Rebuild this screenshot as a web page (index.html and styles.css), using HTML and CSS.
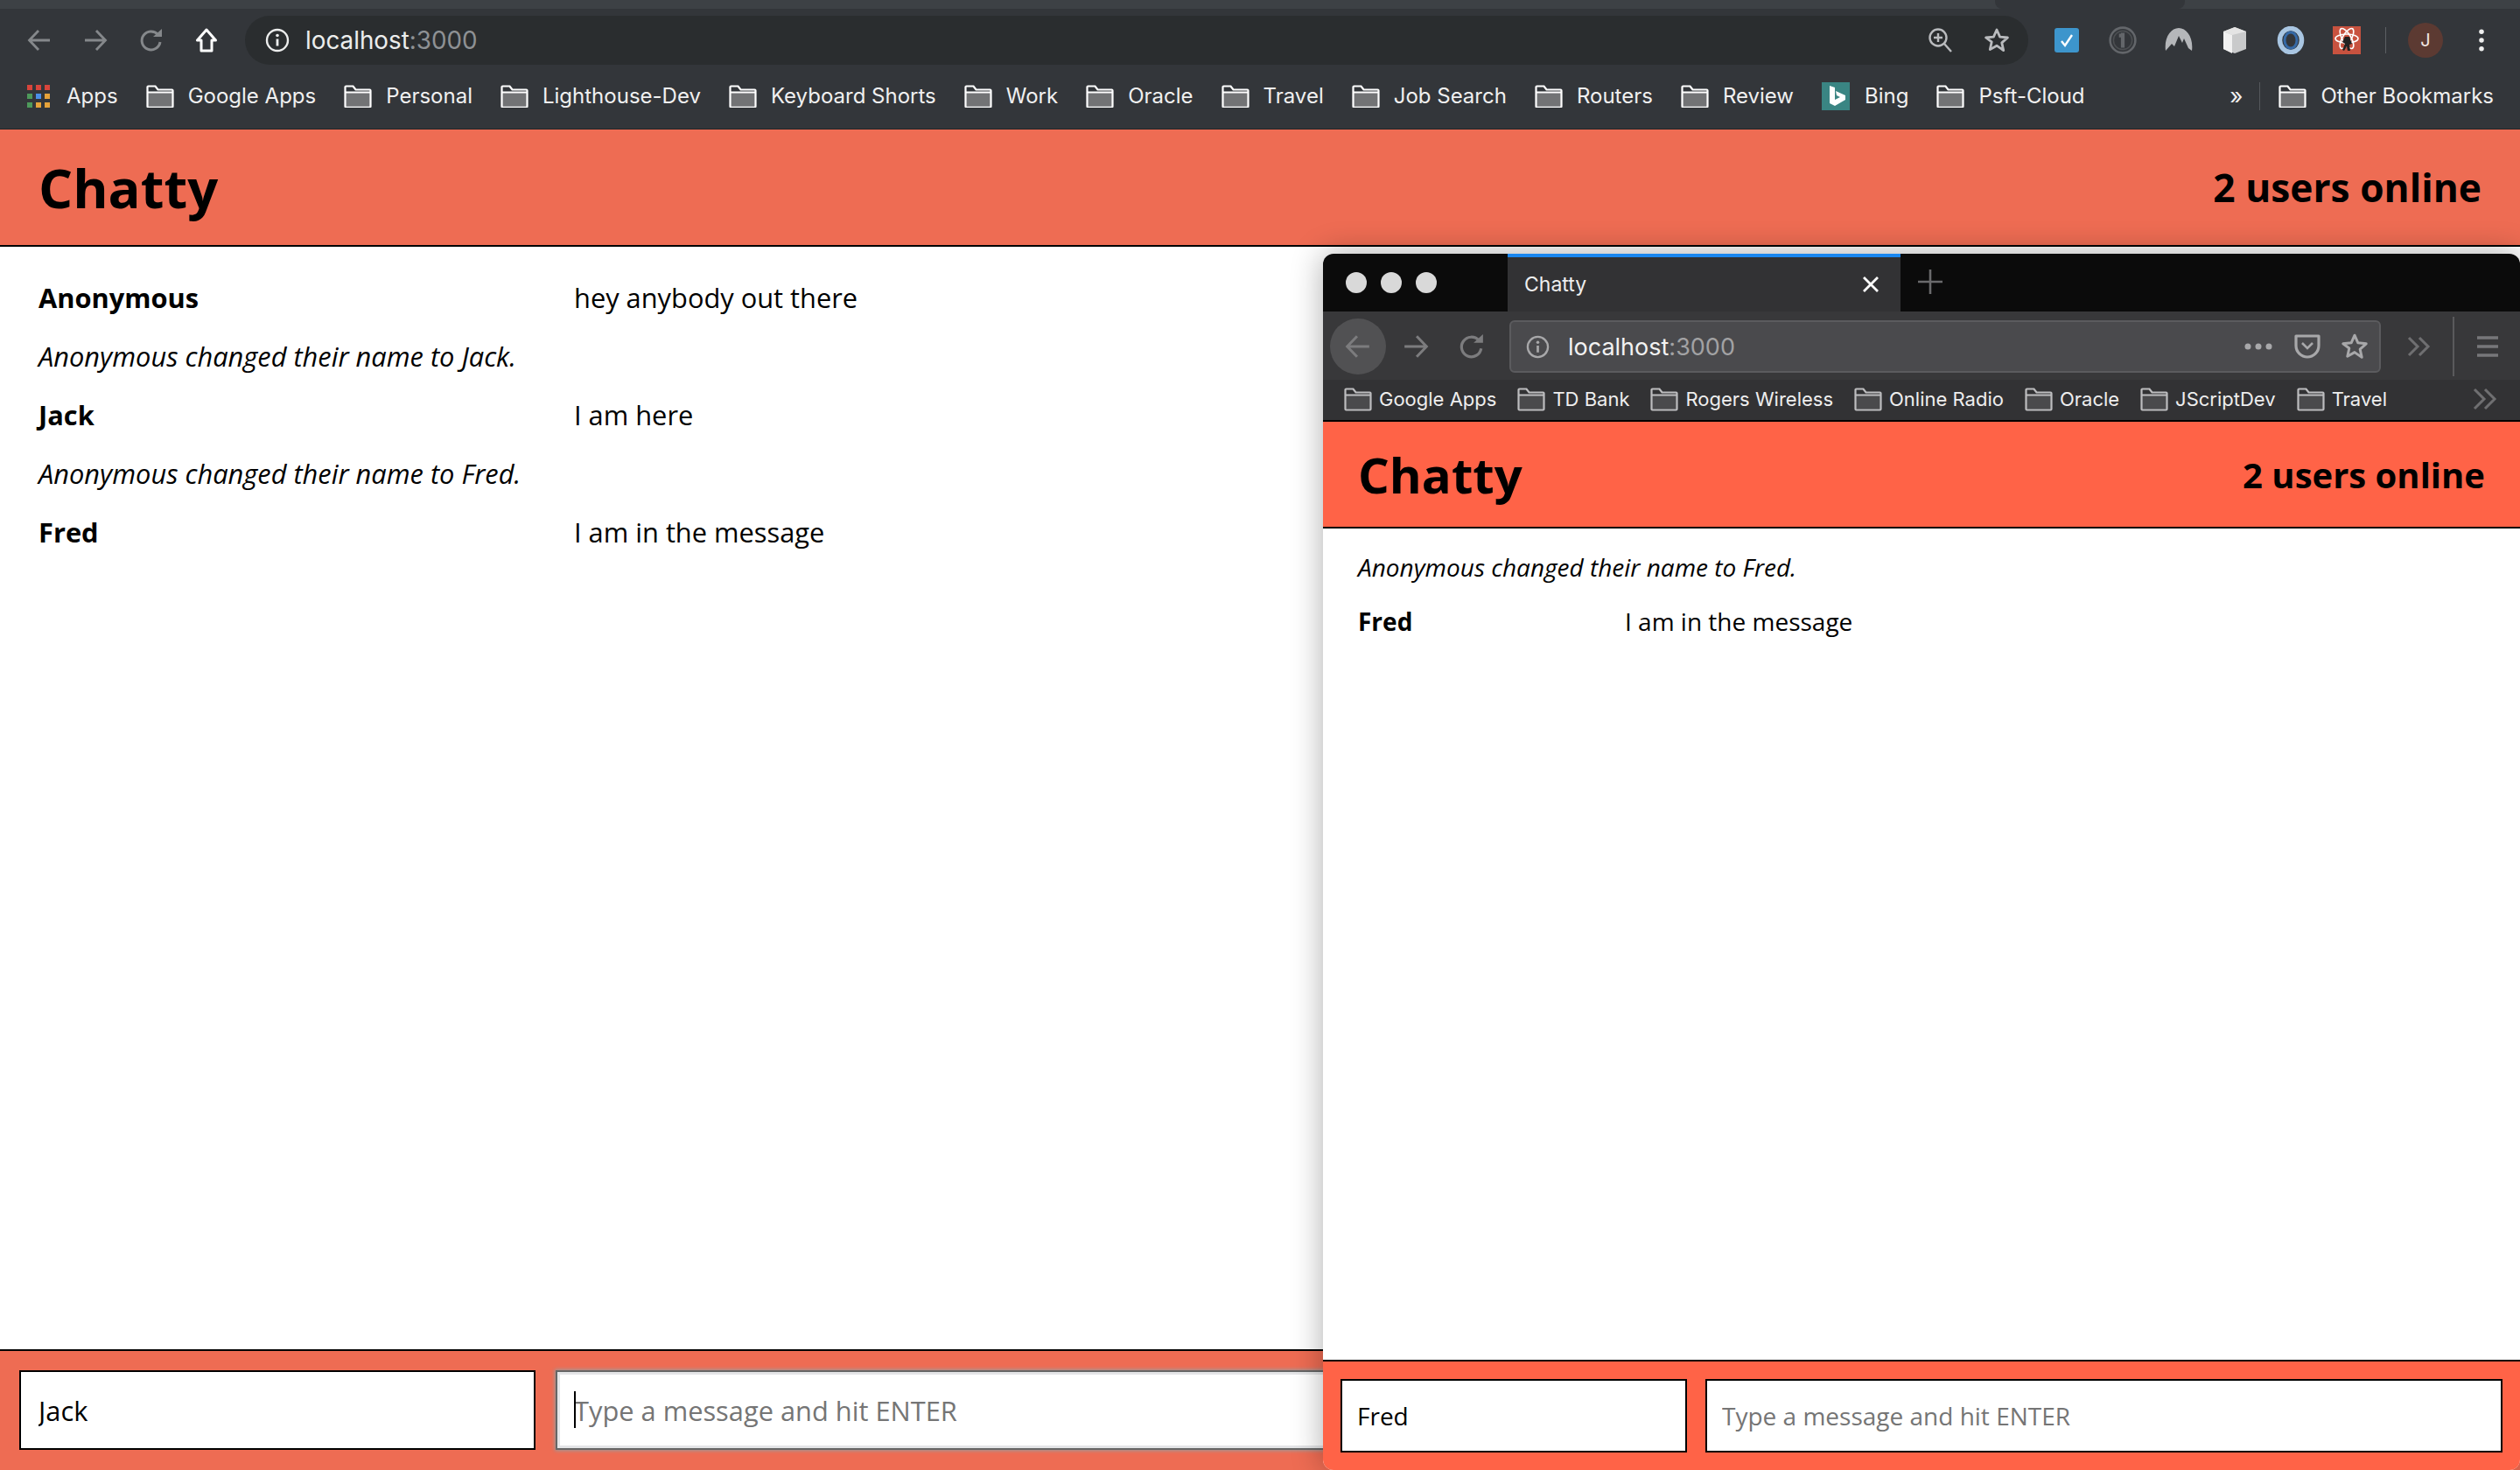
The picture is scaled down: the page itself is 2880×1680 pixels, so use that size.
FILE: index.html
```html
<!DOCTYPE html>
<html lang="en">
<head>
    <meta charset="UTF-8">
    <meta name="viewport" content="width=device-width, initial-scale=1.0">
    <title>Chatty</title>
    <link rel="stylesheet" href="styles.css">
</head>
<body>
    <!-- Shared icons -->
    <svg class="defs" width="0" height="0">
        <symbol id="folder" viewBox="0 0 32 26">
            <path d="M2 9h28v15H2z" fill="var(--folder-fill)"/>
            <path d="M1.500 24.500V2.500a1 1 0 0 1 1-1h8l3 4h16a1 1 0 0 1 1 1v18a1 1 0 0 1-1 1h-27a1 1 0 0 1-1-1zM1.500 8.500h29" fill="none" stroke="currentColor" stroke-width="2.200"/>
        </symbol>
        <symbol id="back" viewBox="0 0 28 28">
            <path d="M26 14H3M13 3 2.500 14 13 25" fill="none" stroke="currentColor" stroke-width="2.800"/>
        </symbol>
        <symbol id="forward" viewBox="0 0 28 28">
            <path d="M2 14h23M15 3l10.500 11L15 25" fill="none" stroke="currentColor" stroke-width="2.800"/>
        </symbol>
        <symbol id="reload" viewBox="0 0 28 28">
            <path d="M21.500 7.500A10.500 10.500 0 1 0 24 16" fill="none" stroke="currentColor" stroke-width="3"/>
            <path d="M16 10h10V1z" fill="currentColor"/>
        </symbol>
        <symbol id="info" viewBox="0 0 28 28">
            <circle cx="14" cy="14" r="12" fill="none" stroke="currentColor" stroke-width="2.400"/>
            <path d="M14 12.500v8" stroke="currentColor" stroke-width="2.800"/>
            <circle cx="14" cy="8.500" r="1.800" fill="currentColor"/>
        </symbol>
        <symbol id="star" viewBox="0 0 30 30">
            <path d="m15 3 3.600 8.100 8.800.9-6.600 5.900 1.900 8.700L15 21.200l-7.700 4.400 1.900-8.700L2.600 12l8.800-.9z" fill="none" stroke="currentColor" stroke-width="2.800" stroke-linejoin="round"/>
        </symbol>
    </svg>

    <!-- Chrome window -->
    <div class="window">
        <div class="tabstrip">
            <div class="tab-notch"></div>
        </div>
        <div class="toolbar">
            <svg class="nav-ico dim"><use href="#back"/></svg>
            <svg class="nav-ico dim"><use href="#forward"/></svg>
            <svg class="nav-ico dim"><use href="#reload"/></svg>
            <svg class="nav-ico home" viewBox="0 0 26 28"><path d="M13 2 2.500 14H7v12h12V14h4.500z" fill="none" stroke="#fff" stroke-width="3" stroke-linejoin="round"/></svg>
            <div class="omnibox">
                <svg class="omni-info"><use href="#info"/></svg>
                <span class="url">localhost<span class="url-port">:3000</span></span>
                <svg class="omni-zoom" viewBox="0 0 28 30">
                    <circle cx="12" cy="12" r="9.500" fill="none" stroke="#b9bbbe" stroke-width="2.400"/>
                    <path d="M12 7v10M7 12h10M19 19l8 9" stroke="#b9bbbe" stroke-width="2.400"/>
                </svg>
                <svg class="omni-star"><use href="#star"/></svg>
            </div>
            <div class="extensions">
                <svg class="ext" viewBox="-2 -2 32 32"><rect width="28" height="28" rx="3" fill="#3d95cc"/><path d="m8 15 4 5 8-12" fill="none" stroke="#fff" stroke-width="2.400"/></svg>
                <svg class="ext" viewBox="0 0 30 30"><circle cx="15" cy="15" r="13.500" fill="none" stroke="#63666a" stroke-width="2.400"/><circle cx="15" cy="15" r="10" fill="none" stroke="#4c4f52" stroke-width="1.500"/><path d="M13 7h4v16h-4zM11 8h4v4h-4z" fill="#63666a"/></svg>
                <svg class="ext" viewBox="0 0 32 30"><path d="M1 27C-1 12 7 1 16 1s17 11 15 26l-4-3-5-11-2 5-4-8-5 12-3-3z" fill="#b5b7ba"/></svg>
                <svg class="ext" viewBox="0 0 32 32"><path d="m16 1 13 5v20l-13 5-13-5V6z" fill="#c9cacb"/><path d="M3 6l10 4v21l-10-5z" fill="#f1f1f1"/><path d="m16 1 13 5-16 4L3 6z" fill="#e4e4e4"/></svg>
                <svg class="ext" viewBox="0 0 32 32"><ellipse cx="16" cy="16" rx="12.500" ry="13.500" fill="none" stroke="#a9c6e2" stroke-width="5.500"/><ellipse cx="16" cy="16" rx="7" ry="9" fill="none" stroke="#3569a6" stroke-width="3"/></svg>
                <svg class="ext" viewBox="0 0 32 32"><rect width="32" height="32" fill="#c8523f"/><g fill="none" stroke="#fff" stroke-width="1.600"><ellipse cx="16" cy="14" rx="13" ry="5"/><ellipse cx="16" cy="14" rx="13" ry="5" transform="rotate(60 16 14)"/><ellipse cx="16" cy="14" rx="13" ry="5" transform="rotate(120 16 14)"/></g><path d="M14 12h5l3 8-3 1 1 7h-3l-1-5-3 5-2-1 3-7-3-2z" fill="#222"/></svg>
            </div>
            <div class="toolbar-sep"></div>
            <div class="avatar">J</div>
            <svg class="kebab" viewBox="0 0 8 32"><circle cx="4" cy="4" r="3.400" fill="#eee"/><circle cx="4" cy="16" r="3.400" fill="#eee"/><circle cx="4" cy="28" r="3.400" fill="#eee"/></svg>
        </div>
        <div class="bookmarks">
            <div class="bm">
                <svg class="apps" viewBox="0 0 26 26">
                    <path d="M0 0h6v6H0z" fill="#d8453b"/><path d="M10 0h6v6h-6z" fill="#d8453b"/><path d="M20 0h6v6h-6z" fill="#d8453b"/>
                    <path d="M0 10h6v6H0z" fill="#4e9a5b"/><path d="M10 10h6v6h-6z" fill="#4a8fe8"/><path d="M20 10h6v6h-6z" fill="#e6a33a"/>
                    <path d="M0 20h6v6H0z" fill="#4e9a5b"/><path d="M10 20h6v6h-6z" fill="#e6a33a"/><path d="M20 20h6v6h-6z" fill="#e6a33a"/>
                </svg>
                Apps
            </div>
            <div class="bm"><svg class="folder"><use href="#folder"/></svg>Google Apps</div>
            <div class="bm"><svg class="folder"><use href="#folder"/></svg>Personal</div>
            <div class="bm"><svg class="folder"><use href="#folder"/></svg>Lighthouse-Dev</div>
            <div class="bm"><svg class="folder"><use href="#folder"/></svg>Keyboard Shorts</div>
            <div class="bm"><svg class="folder"><use href="#folder"/></svg>Work</div>
            <div class="bm"><svg class="folder"><use href="#folder"/></svg>Oracle</div>
            <div class="bm"><svg class="folder"><use href="#folder"/></svg>Travel</div>
            <div class="bm"><svg class="folder"><use href="#folder"/></svg>Job Search</div>
            <div class="bm"><svg class="folder"><use href="#folder"/></svg>Routers</div>
            <div class="bm"><svg class="folder"><use href="#folder"/></svg>Review</div>
            <div class="bm">
                <svg class="bing" viewBox="0 0 32 32"><rect width="32" height="32" fill="#3a8583"/><path d="M9 4l6 2v14l6-3-4-2-1-5 11 5v5L15 27l-6-3z" fill="#fff"/></svg>
                Bing
            </div>
            <div class="bm"><svg class="folder"><use href="#folder"/></svg>Psft-Cloud</div>
            <div class="bm-more">»</div>
            <div class="bm-sep"></div>
            <div class="bm"><svg class="folder"><use href="#folder"/></svg>Other Bookmarks</div>
        </div>
        <main class="chatty">
            <nav class="navbar">
                <h1 class="brand">Chatty</h1>
                <span class="user-count">2 users online</span>
            </nav>
            <div class="messages">
                <div class="message"><span class="username">Anonymous</span><span class="content">hey anybody out there</span></div>
                <div class="notification">Anonymous changed their name to Jack.</div>
                <div class="message"><span class="username">Jack</span><span class="content">I am here</span></div>
                <div class="notification">Anonymous changed their name to Fred.</div>
                <div class="message"><span class="username">Fred</span><span class="content">I am in the message</span></div>
            </div>
            <footer class="chatbar">
                <input class="chatbar-name" value="Jack">
                <div class="focused-wrap">
                    <input class="chatbar-msg focused" placeholder="Type a message and hit ENTER">
                </div>
            </footer>
        </main>
    </div>

    <!-- Firefox window on top -->
    <div class="window ff">
        <div class="ff-tabstrip">
            <div class="lights"><i></i><i></i><i></i></div>
            <div class="ff-tab">
                <span>Chatty</span>
                <svg class="ff-close" viewBox="0 0 20 20"><path d="M2 2l16 16M18 2 2 18" stroke="#fff" stroke-width="2.800"/></svg>
            </div>
            <svg class="ff-plus" viewBox="0 0 28 28"><path d="M14 0v28M0 14h28" stroke="#6a6a6c" stroke-width="2.600"/></svg>
        </div>
        <div class="ff-toolbar">
            <div class="ff-backbtn"><svg class="ff-ico"><use href="#back"/></svg></div>
            <svg class="ff-ico ff-fwd"><use href="#forward"/></svg>
            <svg class="ff-ico ff-reload"><use href="#reload"/></svg>
            <div class="ff-urlbar">
                <svg class="ff-info"><use href="#info"/></svg>
                <span class="ff-url">localhost<span class="ff-port">:3000</span></span>
                <svg class="ff-dots" viewBox="0 0 32 8"><circle cx="4" cy="4" r="3.500" fill="#a8a8aa"/><circle cx="16" cy="4" r="3.500" fill="#a8a8aa"/><circle cx="28" cy="4" r="3.500" fill="#a8a8aa"/></svg>
                <svg class="ff-pocket" viewBox="0 0 30 28"><path d="M2 2h26v11a13 13 0 0 1-26 0z" fill="none" stroke="#a8a8aa" stroke-width="3.200" stroke-linejoin="round"/><path d="m9 10 6 6 6-6" fill="none" stroke="#a8a8aa" stroke-width="2.600"/></svg>
                <svg class="ff-star"><use href="#star"/></svg>
            </div>
            <svg class="ff-chevrons" viewBox="0 0 28 24"><path d="m2 2 10 10L2 22M14 2l10 10-10 10" fill="none" stroke="#6f6f71" stroke-width="3"/></svg>
            <div class="ff-sep"></div>
            <svg class="ff-menu" viewBox="0 0 24 24"><path d="M0 2h24M0 12h24M0 22h24" stroke="#77777a" stroke-width="3.400"/></svg>
        </div>
        <div class="ff-bookmarks">
            <div class="ff-bm"><svg class="ff-folder"><use href="#folder"/></svg>Google Apps</div>
            <div class="ff-bm"><svg class="ff-folder"><use href="#folder"/></svg>TD Bank</div>
            <div class="ff-bm"><svg class="ff-folder"><use href="#folder"/></svg>Rogers Wireless</div>
            <div class="ff-bm"><svg class="ff-folder"><use href="#folder"/></svg>Online Radio</div>
            <div class="ff-bm"><svg class="ff-folder"><use href="#folder"/></svg>Oracle</div>
            <div class="ff-bm"><svg class="ff-folder"><use href="#folder"/></svg>JScriptDev</div>
            <div class="ff-bm"><svg class="ff-folder"><use href="#folder"/></svg>Travel</div>
            <svg class="ff-bm-more" viewBox="0 0 28 26"><path d="m2 2 11 11L2 24M14 2l11 11-11 11" fill="none" stroke="#6f6f71" stroke-width="3"/></svg>
        </div>
        <main class="chatty small">
            <nav class="navbar">
                <h1 class="brand">Chatty</h1>
                <span class="user-count">2 users online</span>
            </nav>
            <div class="messages">
                <div class="notification">Anonymous changed their name to Fred.</div>
                <div class="message"><span class="username">Fred</span><span class="content">I am in the message</span></div>
            </div>
            <footer class="chatbar">
                <input class="chatbar-name" value="Fred">
                <input class="chatbar-msg" placeholder="Type a message and hit ENTER">
            </footer>
        </main>
    </div>
</body>
</html>
```

FILE: styles.css
```css
* {
    box-sizing: border-box;
}

html, body {
    height: 100%;
    margin: 0;
    overflow: hidden;
}

body {
    position: relative;
    font-family: "Open Sans", sans-serif;
    color: #000;
    background: #fff;
}

.defs {
    position: absolute;
}

.window {
    display: flex;
    flex-direction: column;
    height: 100%;
}

/* Chrome */
.tabstrip {
    flex: none;
    height: 10px;
    background: #3d4145;
    display: flex;
}

.tab-notch {
    width: 217px;
    height: 10px;
    margin-left: 2280px;
    background: #33363a;
    border-radius: 0 0 8px 8px;
}

.toolbar {
    flex: none;
    height: 74px;
    padding: 8px 0 10px 31px;
    background: #33363a;
    display: flex;
    align-items: center;
}

.nav-ico {
    width: 28px;
    height: 28px;
    margin-right: 36px;
    flex: none;
}

.dim {
    color: #85888b;
}

.home {
    width: 26px;
    margin-right: 31px;
}

.omnibox {
    flex: none;
    width: 2038px;
    height: 56px;
    background: #2a2d2f;
    border-radius: 28px;
    display: flex;
    align-items: center;
    padding-left: 23px;
}

.omni-info {
    width: 28px;
    height: 28px;
    color: #eceded;
    flex: none;
}

.url {
    margin-left: 18px;
    font-family: Inter, sans-serif;
    font-size: 27.8px;
    color: #eceded;
}

.url-port {
    color: #8e9194;
}

.omni-zoom {
    width: 28px;
    height: 30px;
    margin-left: auto;
}

.omni-star {
    width: 30px;
    height: 30px;
    margin-left: 36px;
    margin-right: 21px;
    color: #b9bbbe;
}

.extensions {
    display: flex;
    align-items: center;
    margin-left: 28px;
}

.ext {
    width: 32px;
    height: 32px;
    margin-right: 32px;
    flex: none;
}

.toolbar-sep {
    width: 1px;
    height: 30px;
    margin-left: -4px;
    background: #5c5f63;
}

.avatar {
    width: 40px;
    height: 40px;
    margin-left: 25px;
    border-radius: 50%;
    background: #5c3a32;
    color: #f2e6e2;
    font-family: Inter, sans-serif;
    font-size: 20px;
    display: flex;
    align-items: center;
    justify-content: center;
}

.kebab {
    width: 8px;
    height: 26px;
    margin-left: 40px;
}

.bookmarks {
    flex: none;
    height: 64px;
    padding: 0 30px 12px 31px;
    background: #33363a;
    border-bottom: 1px solid #232527;
    display: flex;
    align-items: center;
    gap: 32px;
    --folder-fill: #727375;
    color: #f0f0f0;
    font-family: Inter, sans-serif;
    font-size: 24px;
}

.bm {
    display: flex;
    align-items: center;
    white-space: nowrap;
}

.apps {
    width: 26px;
    height: 26px;
    margin-right: 19px;
}

.folder {
    width: 32px;
    height: 26px;
    margin-right: 16px;
    color: #fff;
}

.bing {
    width: 32px;
    height: 32px;
    margin-right: 17px;
}

.bm-more {
    margin-left: auto;
    font-size: 26px;
}

.bm-sep {
    width: 1px;
    height: 32px;
    margin-left: -13px;
    margin-right: -11px;
    background: #55585c;
}

/* The chat app */
.chatty {
    flex: 1;
    min-height: 0;
    display: flex;
    flex-direction: column;
    --app-bg: #ee6c53;
}

.navbar {
    flex: none;
    height: 134px;
    padding: 0 44px;
    background: var(--app-bg);
    border-bottom: 2px solid #000;
    display: flex;
    align-items: center;
    justify-content: space-between;
}

.brand {
    margin: 0;
    font-size: 61.5px;
    font-weight: 700;
}

.user-count {
    font-size: 44.3px;
    font-weight: 700;
}

.messages {
    flex: 1;
    padding: 24px 0 0 44px;
    font-size: 30.8px;
}

.message, .notification {
    height: 67px;
    display: flex;
    align-items: center;
}

.username {
    width: 612px;
    font-weight: 700;
}

.notification {
    font-style: italic;
}

.chatbar {
    flex: none;
    height: 138px;
    padding: 22px 22px 23px;
    background: var(--app-bg);
    border-top: 2px solid #000;
    display: flex;
    gap: 23px;
}

.chatbar input {
    font-family: "Open Sans", sans-serif;
    font-size: 30.8px;
    color: #000;
    background: #fff;
    border: 2px solid #000;
    padding: 0 20px;
    outline: none;
    border-radius: 0;
}

.chatbar input::placeholder {
    color: #757575;
}

.chatbar-name {
    flex: none;
    width: 590px;
}

.chatbar-msg {
    flex: 1;
    min-width: 0;
}

.focused-wrap {
    flex: 1;
    position: relative;
    display: flex;
}

.focused-wrap::after {
    content: "";
    position: absolute;
    left: 21px;
    top: 24px;
    width: 2px;
    height: 42px;
    background: #000;
}

.chatbar input.focused {
    padding-left: 19px;
    border: 2px solid #666;
    box-shadow: inset 0 0 0 3px #e4e5e7, 0 0 4px 1px #9a9a9a;
}

/* Firefox window, sits over the other one */
.ff {
    position: absolute;
    left: 1512px;
    top: 290px;
    right: 0;
    bottom: 0;
    height: auto;
    border-radius: 12px;
    overflow: hidden;
    background: #fff;
    box-shadow: 0 0 36px rgba(0, 0, 0, 0.32);
}

.ff-tabstrip {
    flex: none;
    height: 66px;
    background: #0b0b0b;
    display: flex;
    align-items: stretch;
}

.lights {
    width: 211px;
    display: flex;
    align-items: center;
    padding: 0 0 0 26px;
    gap: 16px;
}

.lights i {
    width: 24px;
    height: 24px;
    border-radius: 50%;
    background: #d9d9d9;
}

.ff-tab {
    width: 449px;
    background: #323234;
    border-top: 4px solid #1a87f0;
    padding: 0 24px 0 19px;
    display: flex;
    align-items: center;
    justify-content: space-between;
    font-family: Inter, sans-serif;
    font-size: 23px;
    color: #eee;
}

.ff-close {
    width: 20px;
    height: 20px;
}

.ff-plus {
    width: 28px;
    height: 28px;
    margin: 18px 0 0 20px;
}

.ff-toolbar {
    flex: none;
    height: 78px;
    padding: 2px 0 0 8px;
    background: #38383a;
    display: flex;
    align-items: center;
}

.ff-backbtn {
    width: 64px;
    height: 64px;
    border-radius: 50%;
    background: #515153;
    display: flex;
    align-items: center;
    justify-content: center;
    flex: none;
}

.ff-ico {
    width: 30px;
    height: 30px;
    color: #7c7c7e;
    flex: none;
}

.ff-fwd {
    margin-left: 19px;
}

.ff-reload {
    margin-left: 34px;
}

.ff-urlbar {
    flex: none;
    width: 996px;
    height: 60px;
    margin-left: 28px;
    background: #4a4a4d;
    border: 2px solid #5b5b5e;
    border-radius: 6px;
    display: flex;
    align-items: center;
    padding-left: 17px;
}

.ff-info {
    width: 27px;
    height: 27px;
    color: #a8a8aa;
}

.ff-url {
    margin-left: 21px;
    font-family: Inter, sans-serif;
    font-size: 27px;
    color: #f2f2f2;
}

.ff-port {
    color: #a2a2a4;
}

.ff-dots {
    width: 32px;
    height: 8px;
    margin-left: auto;
}

.ff-pocket {
    width: 30px;
    height: 28px;
    margin-left: 25px;
}

.ff-star {
    width: 32px;
    height: 32px;
    margin: 0 12px 0 23px;
    color: #a8a8aa;
}

.ff-chevrons {
    width: 28px;
    height: 24px;
    margin-left: 30px;
}

.ff-sep {
    width: 2px;
    height: 68px;
    margin-left: 24px;
    background: #5a5a5c;
}

.ff-menu {
    width: 24px;
    height: 24px;
    margin-left: 26px;
}

.ff-bookmarks {
    flex: none;
    height: 48px;
    padding: 0 26px 2px 24px;
    background: #323234;
    border-bottom: 2px solid #000;
    display: flex;
    align-items: center;
    gap: 24px;
    --folder-fill: #4a4a4c;
    color: #eee;
    font-family: Inter, sans-serif;
    font-size: 22px;
}

.ff-bm {
    display: flex;
    align-items: center;
    white-space: nowrap;
}

.ff-folder {
    width: 32px;
    height: 28px;
    margin-right: 8px;
    color: #bdbdbf;
}

.ff-bm-more {
    width: 28px;
    height: 26px;
    margin-left: auto;
}

.small {
    --app-bg: #ff6347;
}

.small .navbar {
    height: 122px;
    padding: 0 40px;
}

.small .brand {
    font-size: 56.3px;
}

.small .user-count {
    font-size: 40px;
}

.small .messages {
    padding: 13px 0 0 40px;
    font-size: 28px;
}

.small .message, .small .notification {
    height: 62px;
}

.small .username {
    width: 305px;
}

.small .chatbar {
    height: 126px;
    padding: 20px;
    gap: 21px;
}

.small .chatbar input {
    font-size: 28px;
    padding: 0 17px;
}

.small .chatbar-name {
    width: 396px;
}
```
